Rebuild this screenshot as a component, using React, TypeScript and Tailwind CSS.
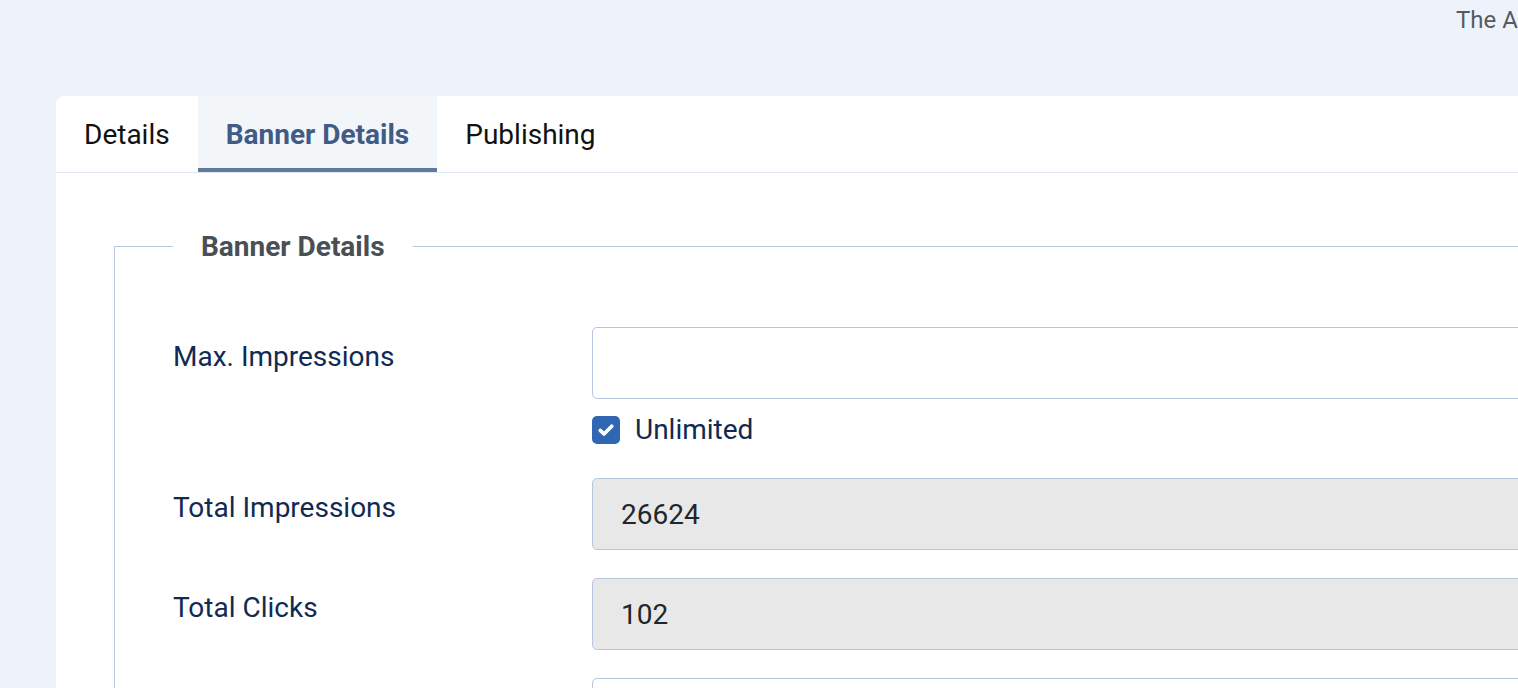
import React, { useState } from "react";

type Row = { label: string; value?: string; disabled?: boolean; unlimited?: boolean };

const rows: Row[] = [
  { label: "Max. Impressions", value: "", unlimited: true },
  { label: "Total Impressions", value: "26624", disabled: true },
  { label: "Total Clicks", value: "102", disabled: true },
  { label: "Client", value: "" },
];

const tabs = ["Details", "Banner Details", "Publishing"];

const CheckMark = () => (
  <svg viewBox="0 0 16 16" className="w-[20px] h-[20px]" fill="none">
    <path d="M3.4 8.3l3 2.9L12.6 5" stroke="white" strokeWidth="2.9" strokeLinecap="round" strokeLinejoin="round" />
  </svg>
);

const App = () => {
  const [active, setActive] = useState<number>(1);
  const [unlimited, setUnlimited] = useState<boolean>(true);

  return (
    <div
      className="min-h-screen w-full overflow-hidden bg-[#eef3fb] text-[#112a52]"
      style={{ fontFamily: "Roboto, 'Liberation Sans', sans-serif" }}>
      {/* ------------------------ HEADER ----------------------- */}
      <div className="h-[96px] pl-[1456px] pt-[4px] whitespace-nowrap text-[24px] leading-[32px] text-[#565b62]">
        The Administrator
      </div>

      <div className="ml-[56px] w-[1560px] rounded-tl-lg bg-white">
        {/* ------------------------ TABS ----------------------- */}
        <div className="flex h-[77px] border-b border-[#dfe6ef]">
          {tabs.map((t, i) => (
            <button
              key={t}
              onClick={() => setActive(i)}
              className={
                i === active
                  ? "h-[76px] px-[28px] pt-[6px] border-b-4 border-[#62799e] bg-[#f3f6f9] text-[28px] font-bold text-[#415b85]"
                  : "h-[76px] px-[28px] pt-[2px] text-[28px] text-[#111]"
              }>
              {t}
            </button>
          ))}
        </div>

        {/* ------------------------ BODY ----------------------- */}
        <div className="pl-[58px] pt-[56px] pb-[40px]">
          <fieldset className="border-l border-t border-[#b6c8e2] pl-[58px] pt-[64px]">
            <legend className="px-[28px] pt-[2px] text-[28px] leading-[32px] font-bold text-[#4a4e55]">
              Banner Details
            </legend>

            {rows.map((r) => (
              <div key={r.label} className="flex mb-[28px]">
                <label className="w-[419px] shrink-0 pt-[9px] text-[28px] leading-[42px]">
                  {r.label}
                </label>
                <div className="flex-1">
                  <input
                    readOnly
                    value={r.value}
                    disabled={r.disabled}
                    className={
                      r.disabled
                        ? "w-full h-[72px] rounded-[5px] border border-[#b6c6dd] bg-[#e8e8e8] px-[28px] text-[28px] text-[#22262a]"
                        : "w-full h-[72px] rounded-[5px] border border-[#b6c6dd] bg-white px-[28px] text-[28px] text-[#22262a]"
                    }
                  />
                  {r.unlimited && (
                    <div
                      onClick={() => setUnlimited((s) => !s)}
                      className="flex items-center h-[41px] mt-[10px] cursor-pointer">
                      <span
                        className={
                          unlimited
                            ? "flex items-center justify-center w-[28px] h-[28px] rounded-[5px] bg-[#2f67b3]"
                            : "flex items-center justify-center w-[28px] h-[28px] rounded-[5px] border border-[#b6c6dd] bg-white"
                        }>
                        {unlimited && <CheckMark />}
                      </span>
                      <span className="ml-[15px] text-[28px] leading-[42px]">Unlimited</span>
                    </div>
                  )}
                </div>
              </div>
            ))}
          </fieldset>
        </div>
      </div>
    </div>
  );
};

export default App;
